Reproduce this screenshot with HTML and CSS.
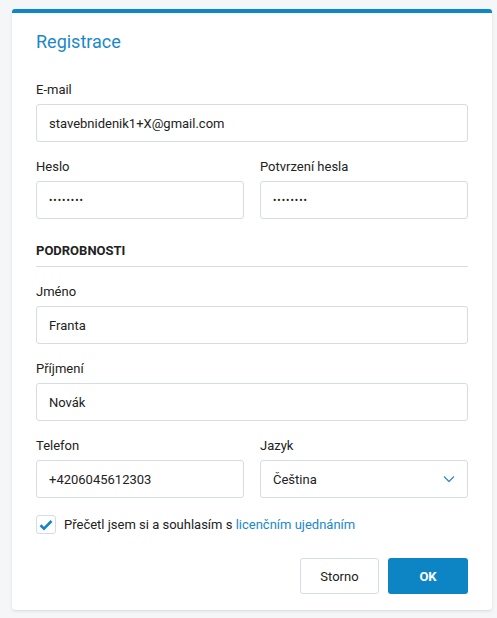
FILE: index.html
```html
<!DOCTYPE html>
<html lang="cs">
<head>
<meta charset="utf-8">
<title>Registrace</title>
<link rel="stylesheet" href="styles.css">
</head>
<body>
<div class="card">
  <h1 class="title">Registrace</h1>
  <div class="field">
    <label class="label">E-mail</label>
    <div class="input">stavebnidenik1+X@gmail.com</div>
  </div>
  <div class="row">
    <div class="field">
      <label class="label">Heslo</label>
      <div class="input dots">••••••••</div>
    </div>
    <div class="field">
      <label class="label">Potvrzení hesla</label>
      <div class="input dots">••••••••</div>
    </div>
  </div>
  <div class="section">PODROBNOSTI</div>
  <div class="field">
    <label class="label">Jméno</label>
    <div class="input">Franta</div>
  </div>
  <div class="field">
    <label class="label">Příjmení</label>
    <div class="input">Novák</div>
  </div>
  <div class="row">
    <div class="field">
      <label class="label">Telefon</label>
      <div class="input">+4206045612303</div>
    </div>
    <div class="field">
      <label class="label">Jazyk</label>
      <div class="input select">
        <span>Čeština</span>
        <svg class="chev" width="12" height="8" viewBox="0 0 12 8"><path d="M1 1.5 L6 6.5 L11 1.5" fill="none" stroke="#3a8fcb" stroke-width="1.4"/></svg>
      </div>
    </div>
  </div>
  <div class="check-row">
    <span class="checkbox"><svg width="14" height="12" viewBox="0 0 14 12"><path d="M1.5 6.2 L5 9.6 L12.5 2" fill="none" stroke="#1585c6" stroke-width="2.6"/></svg></span>
    <span class="check-text">Přečetl jsem si a souhlasím s <a class="link">licenčním ujednáním</a></span>
  </div>
  <div class="actions">
    <button class="btn btn-cancel">Storno</button>
    <button class="btn btn-ok">OK</button>
  </div>
</div>
</body>
</html>
```
FILE: styles.css
```css
* { box-sizing: border-box; }
html, body { margin: 0; padding: 0; }
body {
  background: #f5f6f8;
  font-family: Roboto, "Liberation Sans", sans-serif;
  color: #222;
  width: 497px;
  height: 618px;
  padding: 9px 5px 0 12px;
}
.card {
  width: 480px;
  background: #fff;
  border-top: 4px solid #0f86c6;
  border-radius: 3px;
  box-shadow: 0 1px 3px rgba(0,0,0,0.12);
  padding: 17px 24px 16px 24px;
  display: flex;
  flex-direction: column;
}
.title {
  margin: 0 0 28px 0;
  font-size: 18px;
  font-weight: 400;
  line-height: 24px;
  color: #1a88c9;
}
.field {
  display: flex;
  flex-direction: column;
  flex: 1;
  min-width: 0;
  margin-bottom: 17px;
}
.label {
  font-size: 13px;
  line-height: 16px;
  margin-bottom: 6px;
  color: #222;
}
.input {
  height: 38px;
  border: 1px solid #d5dce6;
  border-radius: 3px;
  padding: 0 12px;
  font-size: 13px;
  display: flex;
  align-items: center;
  color: #222;
}
.dots { font-size: 10px; letter-spacing: 1px; }
.select { justify-content: space-between; padding-right: 12px; }
.row { display: flex; gap: 16px; }
.section {
  font-size: 13px;
  font-weight: 700;
  line-height: 16px;
  padding: 7px 0 7px 0;
  border-bottom: 1px solid #d5dce6;
  margin-bottom: 17px;
}
.check-row {
  display: flex;
  align-items: center;
  gap: 8px;
}
.checkbox {
  width: 20px;
  height: 19px;
  border: 1px solid #d5dce6;
  border-radius: 3px;
  display: flex;
  align-items: center;
  justify-content: center;
}
.check-text { font-size: 13px; line-height: 16px; }
.link { color: #1a88c9; text-decoration: none; }
.actions {
  display: flex;
  justify-content: flex-end;
  gap: 9px;
  margin-top: 24px;
}
.btn {
  height: 36px;
  border-radius: 3px;
  font-family: Roboto, "Liberation Sans", sans-serif;
  font-size: 13px;
  width: 80px;
}
.btn-cancel {
  background: #fff;
  border: 1px solid #d5dce6;
  color: #222;
  width: 79px;
}
.btn-ok {
  background: #0d84c4;
  border: none;
  color: #fff;
  font-weight: 700;
}
```
